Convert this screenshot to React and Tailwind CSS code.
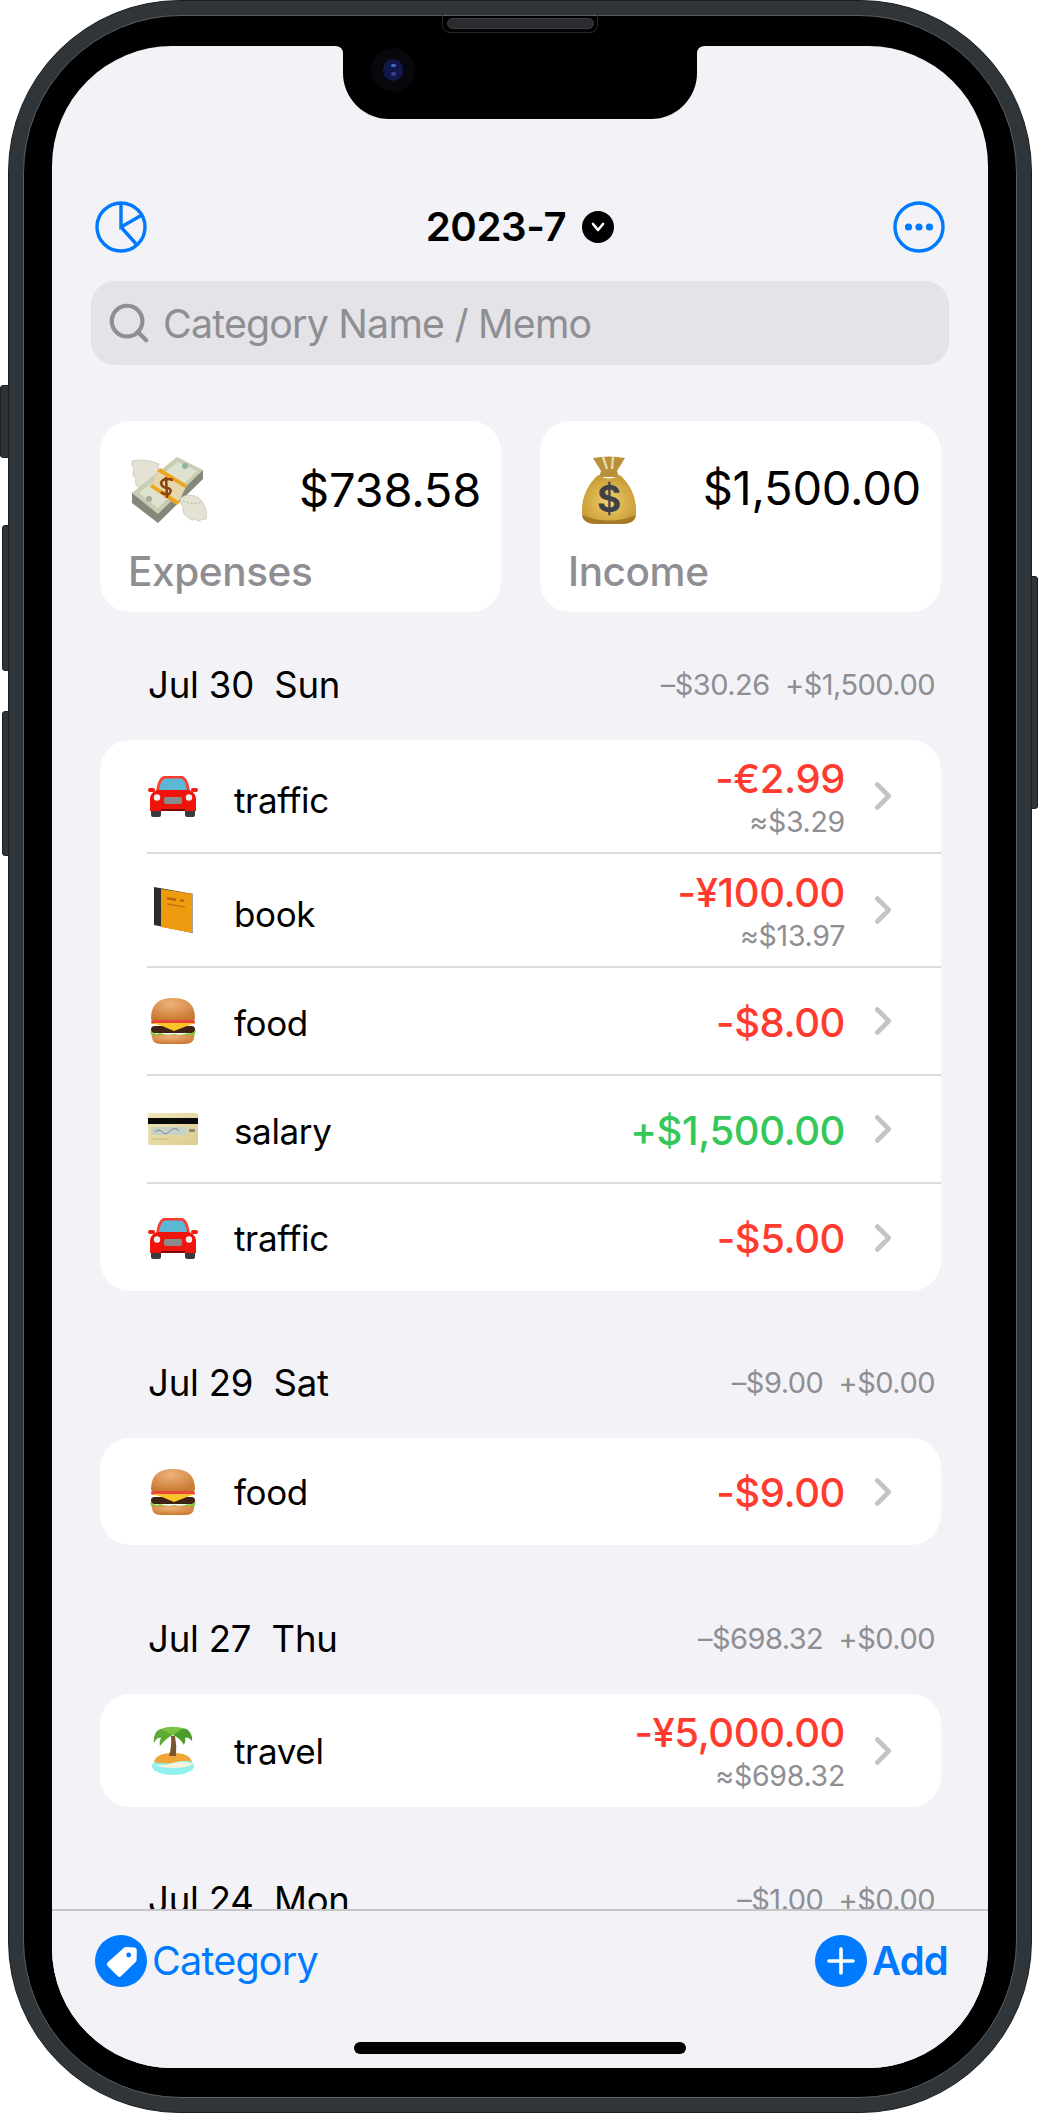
import React from "react";
import { ChevronRight, Search } from "lucide-react";

const PieIcon = () => (
  <svg width="52" height="52" viewBox="0 0 52 52" fill="none" stroke="#007AFF" strokeWidth="3.4">
    <circle cx="26" cy="26" r="24" />
    <path d="M26 2V26L47 14M26 26L42 44" />
  </svg>
);

const MoreIcon = () => (
  <svg width="52" height="52" viewBox="0 0 52 52" fill="none">
    <circle cx="26" cy="26" r="24" stroke="#007AFF" strokeWidth="3.4" />
    <circle cx="15.5" cy="26" r="3.6" fill="#007AFF" />
    <circle cx="26" cy="26" r="3.6" fill="#007AFF" />
    <circle cx="36.5" cy="26" r="3.6" fill="#007AFF" />
  </svg>
);

const TagIcon = () => (
  <svg width="52" height="52" viewBox="0 0 52 52">
    <circle cx="26" cy="26" r="26" fill="#007AFF" />
    <path d="M12.5 27.5L29 12.8Q30.2 11.8 32 12L39.5 12.5Q41.6 12.8 41.8 15L41.6 24.5Q41.6 26 40.6 27L26 41.3Q24.4 42.8 22.8 41.3L12.5 31Q11 29.2 12.5 27.5Z" fill="#fff" />
    <circle cx="33.7" cy="20" r="2.4" fill="#007AFF" />
  </svg>
);

const PlusIcon = () => (
  <svg width="52" height="52" viewBox="0 0 52 52">
    <circle cx="26" cy="26" r="26" fill="#007AFF" />
    <path d="M26 14V38M14 26H38" stroke="#fff" strokeWidth="3.6" strokeLinecap="round" />
  </svg>
);

const MoneyWings = () => (
  <svg width="76" height="68" viewBox="0 0 76 68">
    <path d="M1 6Q14 3 28 9L24 28Q20 33 16 36Q12 40 9 33Q3 31 5 24Q0 20 3 14Q0 10 1 6Z" fill="#e4e2d3" stroke="#bdbbaa" strokeWidth="0.6" />
    <path d="M72 15V24L27 68L1 48V38Z" fill="#84877a" />
    <path d="M46 2L72 15L27 59L1 38Z" fill="#c9cdb4" />
    <path d="M47 7L66 16L27 53L8 38Z" fill="#dfe2ce" />
    <circle cx="54" cy="11" r="3" fill="#8fb8a4" />
    <circle cx="18" cy="44" r="3" fill="#a8ad97" />
    <path d="M29 13L56 30L46 50L19 32Z" fill="#e6d8ad" />
    <path d="M29 13L56 30L54 33L26 16ZM21 29L49 47L46 50L19 32Z" fill="#eda51c" />
    <path d="M42 25Q32 22 30 28Q31 33 37 33Q42 35 38 39Q34 40 30 37M35 22L36 43" fill="none" stroke="#8a4513" strokeWidth="2.6" />
    <path d="M49 43Q58 37 68 43Q75 50 76 60Q76 66 71 64Q68 68 64 64Q60 67 57 62Q51 59 52 52Q49 48 49 43Z" fill="#e4e2d3" stroke="#bdbbaa" strokeWidth="0.6" />
    <path d="M52 46Q60 50 72 47" fill="none" stroke="#9c9a8b" strokeWidth="0.8" strokeDasharray="2 2" />
  </svg>
);

const MoneyBag = () => (
  <svg width="76" height="70" viewBox="0 0 76 70">
    <defs>
      <radialGradient id="bagFill" cx="50%" cy="55%" r="60%">
        <stop offset="0%" stopColor="#f0d06c" />
        <stop offset="100%" stopColor="#c4962f" />
      </radialGradient>
    </defs>
    <path d="M22 3Q38 0 54 3L46 16L48 22H28L30 16Z" fill="#b8913a" />
    <path d="M32 2L36 14M42 2L41 14" stroke="#e7d7a8" strokeWidth="2.4" />
    <path d="M27 20Q38 27 49 20Q66 36 65 58Q64 69 50 69H26Q12 69 11 58Q10 36 27 20Z" fill="url(#bagFill)" />
    <path d="M11 60Q38 71 65 60Q64 69 50 69H26Q12 69 11 60Z" fill="#a37b26" />
    <text x="38" y="57" textAnchor="middle" fontFamily="Inter, sans-serif" fontSize="37" fontWeight="700" fill="#3f4146">$</text>
  </svg>
);

const Car = () => (
  <svg width="52" height="44" viewBox="0 0 52 44">
    <rect x="4" y="32" width="10" height="11" rx="2" fill="#3a3a3c" />
    <rect x="38" y="32" width="10" height="11" rx="2" fill="#3a3a3c" />
    <path d="M9 18Q11 3 17 2H35Q41 3 43 18Z" fill="#ff3b30" />
    <path d="M12 17Q13 6 18 4.5H34Q39 6 40 17Z" fill="#5cb7d4" />
    <rect x="1" y="14" width="7" height="4" rx="2" fill="#ef1d12" />
    <rect x="44" y="14" width="7" height="4" rx="2" fill="#ef1d12" />
    <path d="M3 24Q5 16 12 16H40Q47 16 49 24V37H3Z" fill="#f0150c" />
    <circle cx="10" cy="23.5" r="3.2" fill="#eef1f2" />
    <circle cx="42" cy="23.5" r="3.2" fill="#eef1f2" />
    <rect x="17" y="23" width="18" height="7" rx="2" fill="#8a8b8d" />
    <rect x="14" y="35" width="24" height="2" fill="#7b0905" />
  </svg>
);

const Book = () => (
  <svg width="52" height="48" viewBox="0 0 52 48">
    <path d="M7 1L46 8V47L7 39Z" fill="#2b2b2b" />
    <path d="M14 3L46 8V47L14 41Z" fill="#ee9b10" />
    <path d="M44 7L46 8V47L44 46Z" fill="#a9a49b" />
    <path d="M20 11L29 12.5V15L20 13.5ZM33 13L37 13.7V16L33 15.3Z" fill="#b9640d" />
    <path d="M20 18L38 21" stroke="#c9780c" strokeWidth="1.4" />
  </svg>
);

const Burger = () => (
  <svg width="52" height="48" viewBox="0 0 52 48">
    <defs>
      <radialGradient id="bunFill" cx="45%" cy="25%" r="75%">
        <stop offset="0%" stopColor="#eeb27a" />
        <stop offset="100%" stopColor="#c9782f" />
      </radialGradient>
    </defs>
    <path d="M4 21Q4 1 26 1Q48 1 48 21Q48 24 44 24H8Q4 24 4 21Z" fill="url(#bunFill)" />
    <rect x="4" y="23" width="44" height="4" rx="2" fill="#e8463a" />
    <rect x="4" y="29" width="44" height="7" rx="3.5" fill="#3f2216" />
    <path d="M4 26H48L40 29L27 34L15 29Z" fill="#fbc52a" />
    <path d="M3 34Q8 38 13 36Q20 39 27 37Q35 39 41 36Q46 37 49 33L47 40H5Z" fill="#86c83c" />
    <path d="M5 38H47V40Q47 47 38 47H14Q5 47 5 40Z" fill="url(#bunFill)" />
  </svg>
);

const CreditCard = () => (
  <svg width="52" height="34" viewBox="0 0 52 34">
    <defs>
      <linearGradient id="cardFill" x1="0" y1="0" x2="1" y2="1">
        <stop offset="0%" stopColor="#efe6bb" />
        <stop offset="100%" stopColor="#dccb8d" />
      </linearGradient>
    </defs>
    <rect x="1" y="1" width="50" height="32" rx="2" fill="url(#cardFill)" />
    <rect x="1" y="6" width="50" height="6" fill="#0a0a0a" />
    <rect x="4" y="15" width="36" height="8" fill="#c7d2c4" />
    <path d="M8 20Q12 16 15 20T23 19T32 19" fill="none" stroke="#6d84a8" strokeWidth="1" />
    <rect x="42" y="17" width="6" height="3" fill="#8a8a80" />
    <path d="M4 27H22" stroke="#d1c388" strokeWidth="1.4" />
  </svg>
);

const Island = () => (
  <svg width="52" height="50" viewBox="0 0 52 50">
    <ellipse cx="26" cy="40" rx="21" ry="9" fill="#8ff0ee" />
    <path d="M7 36Q9 27 26 27Q43 27 45 36Q38 33 26 37Q14 38 7 36Z" fill="#f0a638" />
    <path d="M6 38Q14 41 26 37Q38 34 46 38Q40 42 26 42Q12 42 6 38Z" fill="#f6f4dc" />
    <path d="M22 30Q25 20 24 10H28Q30 20 29 30Z" fill="#7a5630" />
    <path d="M26 9Q18 -1 10 5Q6 10 7 17Q10 11 14 12Q12 16 13 20Q19 12 26 9Z" fill="#5cab32" />
    <path d="M26 9Q34 -1 41 4Q46 9 45 15Q41 10 38 12Q39 15 37 19Q33 12 26 9Z" fill="#4b9c2c" />
    <path d="M14 3Q22 -1 36 2Q30 7 26 9Q20 6 14 3Z" fill="#7ac242" />
  </svg>
);

const SummaryCard = ({ icon, amount, label, nudge }) => (
  <div className="w-[401px] h-[191px] bg-white rounded-[30px] pl-[28px] pr-[20px] pt-[34px]">
    <div className="flex justify-between h-[70px]">
      <div className="ml-[3px]">{icon}</div>
      <span className={`text-[47px] leading-[56px] text-black tracking-[-0.005em] ${nudge}`}>{amount}</span>
    </div>
    <div className="mt-[23px] text-[40.5px] leading-[48px] font-medium text-[#8E8E93] tracking-[-0.01em]">{label}</div>
  </div>
);

const Row = ({ icon, name, amount, sub, income, last }) => {
  const rowHeight = last ? (sub ? "h-[113px]" : "h-[107px]") : (sub ? "h-[114px]" : "h-[108px]");
  const nameTop = last ? "pt-[1px]" : (sub ? "pt-[7px]" : "pt-[4px]");
  const amountTop = sub ? "pt-[2px]" : (last ? "pt-[2px]" : "pt-[4px]");
  return (
    <div className="pl-[47px]">
      <div className={`flex items-center pr-[35px] ${rowHeight} ${last ? "" : "border-b-[2px] border-[#dcdcde]"}`}>
        <div className="w-[52px] flex justify-center">{icon}</div>
        <span className={`ml-[35px] text-[35px] leading-[44px] text-black tracking-[-0.01em] ${nameTop}`}>{name}</span>
        <div className={`ml-auto flex flex-col items-end ${amountTop}`}>
          <span className={`text-[40px] leading-[46px] font-medium tracking-[-0.01em] ${income ? "text-[#34C759]" : "text-[#FF3B30]"}`}>{amount}</span>
          {sub && <span className="mt-[3px] text-[28.5px] leading-[34px] text-[#8E8E93] tracking-[-0.01em]">{sub}</span>}
        </div>
        <ChevronRight className="ml-[15px] text-[#C4C4C7]" size={46} strokeWidth={2.4} />
      </div>
    </div>
  );
};

const Section = ({ date, day, out, inc, className, children }) => (
  <section className={className}>
    <div className="h-[128px] flex items-end justify-between pb-[37px] pl-[48px] pr-[6px]">
      <span className="text-[36.5px] leading-[36px] text-black tracking-[-0.005em] whitespace-pre">{date}  {day}</span>
      <span className="text-[29px] leading-[36px] text-[#8E8E93] tracking-[-0.018em] whitespace-pre">{out}  {inc}</span>
    </div>
    {children && <div className="bg-white rounded-[30px] overflow-hidden">{children}</div>}
  </section>
);

const Bezel = () => (
  <>
    {/* side buttons */}
    <div className="absolute left-[0px] top-[385px] w-[10px] h-[73px] bg-[#2e3337] rounded-l-[3px] border border-[#1c1f22]" />
    <div className="absolute left-[2px] top-[525px] w-[8px] h-[146px] bg-[#2e3337] rounded-l-[3px] border border-[#1c1f22]" />
    <div className="absolute left-[2px] top-[711px] w-[8px] h-[145px] bg-[#2e3337] rounded-l-[3px] border border-[#1c1f22]" />
    <div className="absolute left-[1030px] top-[576px] w-[8px] h-[233px] bg-[#2e3337] rounded-r-[3px] border border-[#1c1f22]" />
  </>
);

const Speaker = () => (
  <div className="absolute left-[442px] top-[14px] w-[156px] h-[19px] rounded-b-[8px] border border-t-0 border-[#26282b] flex items-center justify-center">
    <div className="w-[147px] h-[11px] rounded-full bg-[#2a2c2f] border border-[#3c3f42]" />
  </div>
);

const Notch = () => (
  <>
    <div className="absolute left-[291px] top-0 w-[354px] h-[73px] bg-black rounded-b-[46px]" />
    {/* little flares where the notch meets the top edge */}
    <svg className="absolute left-[283px] top-0" width="8" height="8" viewBox="0 0 8 8">
      <path d="M0 0H8V8Q8 0 0 0Z" fill="#000" />
    </svg>
    <svg className="absolute left-[645px] top-0" width="8" height="8" viewBox="0 0 8 8">
      <path d="M8 0H0V8Q0 0 8 0Z" fill="#000" />
    </svg>
    <div className="absolute left-[319px] top-[2px] w-[44px] h-[44px] rounded-full bg-[#07070c] flex items-center justify-center">
      <div className="w-[20px] h-[22px] rounded-full bg-[#10184a] flex flex-col items-center justify-around py-[3px]">
        <div className="w-[5px] h-[3px] rounded-full bg-[#3d6bc4]" />
        <div className="w-[5px] h-[4px] rounded-full bg-[#3a3f9e]" />
      </div>
    </div>
  </>
);

export default function App() {
  return (
    <div className="relative w-[1040px] h-[2114px] bg-white overflow-hidden font-['Inter',sans-serif]">
      <Bezel />
      <div className="absolute left-[8px] top-0 w-[1024px] h-[2113px] rounded-[172px] bg-[#2f3539] border border-[#1c1f22] p-[14px]">
        <div className="h-full rounded-[158px] bg-black border border-[#5a5f63] pl-[28px] pr-[28px] pt-[30px] pb-[29px]">
          <div className="relative h-full rounded-[120px] bg-[#F2F2F7] overflow-hidden flex flex-col">
            <Notch />
            <header className="pt-[155px] px-[43px] flex items-center justify-between">
              <PieIcon />
              <div className="flex items-center gap-[16px]">
                <span className="text-[40.2px] leading-[52px] font-semibold text-black tracking-[-0.01em]">2023-7</span>
                <div className="w-[32px] h-[32px] rounded-full bg-black flex items-center justify-center">
                  <svg width="16" height="12" viewBox="0 0 16 12" fill="none" stroke="#fff" strokeWidth="2.6" strokeLinecap="round" strokeLinejoin="round">
                    <path d="M3 3L8 9L13 3" />
                  </svg>
                </div>
              </div>
              <MoreIcon />
            </header>
            <div className="mt-[28px] mx-[39px] h-[84px] rounded-[24px] bg-[#E3E3E8] flex items-center pl-[15px]">
              <Search className="text-[#8E8E93]" size={46} strokeWidth={2.2} />
              <span className="ml-[11px] pt-[3px] text-[39.3px] text-[#8E8E93] tracking-[-0.02em]">Category Name / Memo</span>
            </div>
            <main className="flex-1 overflow-hidden mt-[56px] ml-[48px] mr-[47px]">
              <div className="flex justify-between">
                <SummaryCard icon={<MoneyWings />} amount="$738.58" label="Expenses" nudge="mt-[7px]" />
                <SummaryCard icon={<MoneyBag />} amount="$1,500.00" label="Income" nudge="mt-[5px]" />
              </div>
              <Section date="Jul 30" day="Sun" out="–$30.26" inc="+$1,500.00">
                <Row icon={<Car />} name="traffic" amount="-€2.99" sub="≈$3.29" />
                <Row icon={<Book />} name="book" amount="-¥100.00" sub="≈$13.97" />
                <Row icon={<Burger />} name="food" amount="-$8.00" />
                <Row icon={<CreditCard />} name="salary" amount="+$1,500.00" income />
                <Row icon={<Car />} name="traffic" amount="-$5.00" last />
              </Section>
              <Section className="mt-[19px]" date="Jul 29" day="Sat" out="–$9.00" inc="+$0.00">
                <Row icon={<Burger />} name="food" amount="-$9.00" last />
              </Section>
              <Section className="mt-[21px]" date="Jul 27" day="Thu" out="–$698.32" inc="+$0.00">
                <Row icon={<Island />} name="travel" amount="-¥5,000.00" sub="≈$698.32" last />
              </Section>
              <Section className="mt-[20px]" date="Jul 24" day="Mon" out="–$1.00" inc="+$0.00" />
            </main>
            <footer className="h-[159px] shrink-0 border-t-[2px] border-[#c6c6c8] bg-[#F2F2F7] px-[43px] pt-[24px]">
              <div className="flex items-center">
                <TagIcon />
                <span className="ml-[5px] text-[39.5px] leading-[52px] text-[#007AFF] tracking-[-0.02em]">Category</span>
                <div className="ml-auto"><PlusIcon /></div>
                <span className="ml-[5px] mr-[-3px] text-[40px] leading-[52px] font-semibold text-[#007AFF] tracking-[-0.02em]">Add</span>
              </div>
            </footer>
            <div className="absolute left-[302px] bottom-[14px] w-[332px] h-[12px] rounded-full bg-black" />
          </div>
        </div>
      </div>
      <Speaker />
    </div>
  );
}
